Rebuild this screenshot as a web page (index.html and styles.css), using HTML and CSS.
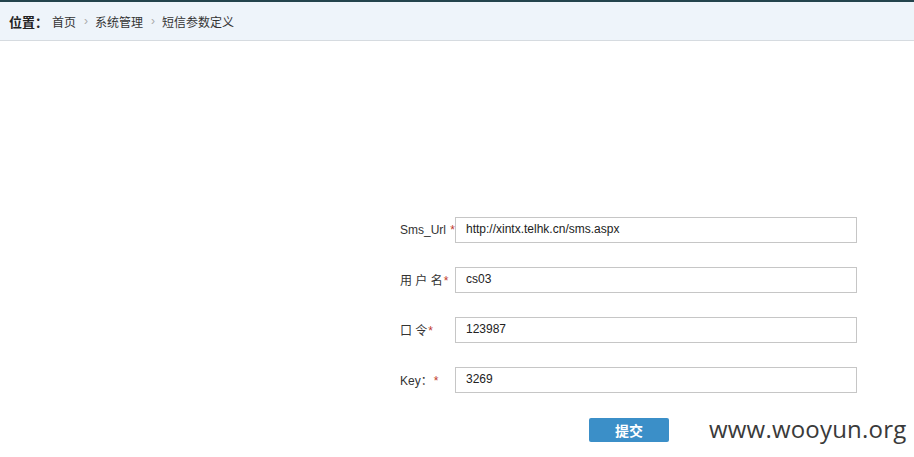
FILE: index.html
```html
<!DOCTYPE html>
<html>
<head>
<meta charset="utf-8">
<link rel="stylesheet" href="styles.css">
</head>
<body>
<div class="crumbs">
  <span class="loc">位置：</span>
  <span class="item">首页</span>
  <span class="sep">›</span>
  <span class="item">系统管理</span>
  <span class="sep">›</span>
  <span class="item">短信参数定义</span>
</div>
<div class="form">
  <div class="row"><label class="lbl">Sms_Url <i>*</i></label><input class="field" value="http://xintx.telhk.cn/sms.aspx"></div>
  <div class="row"><label class="lbl">用 户 名<i>*</i></label><input class="field" value="cs03"></div>
  <div class="row"><label class="lbl">口 令<i>*</i></label><input class="field" value="123987"></div>
  <div class="row"><label class="lbl">Key：<i>*</i></label><input class="field" value="3269"></div>
  <div class="actions"><button class="btn">提交</button></div>
</div>
<div class="mark">www.wooyun.org</div>
</body>
</html>
```
FILE: styles.css
```css
html, body { margin: 0; padding: 0; background: #fff; }
body {
  font-family: "Liberation Sans", Arial, "Noto Sans CJK SC", sans-serif;
  font-size: 12px;
  color: #333;
  width: 914px;
  height: 457px;
  overflow: hidden;
  position: relative;
}
.crumbs {
  height: 38px;
  border-top: 2px solid #23444c;
  border-bottom: 1px solid #d6dbe0;
  background: #eef4fa;
  display: flex;
  align-items: center;
  padding-left: 9px;
  font-size: 12px;
  color: #333;
}
.crumbs span { flex: none; }
.loc { font-weight: bold; font-size: 13px; color: #222; width: 43px; }
.sep { color: #aaa; width: 4px; margin: 0 7px 0 8px; font-size: 12px; }
.form {
  padding-left: 400px;
  padding-top: 176px;
  display: flex;
  flex-direction: column;
}
.row {
  display: flex;
  align-items: center;
  height: 25px;
  margin-bottom: 25px;
}
.lbl {
  width: 55px;
  color: #333;
  font-size: 12px;
  white-space: pre;
}
.lbl i { font-style: normal; color: #c0392b; margin-left: 1px; }
.field {
  box-sizing: border-box;
  width: 402px;
  height: 26px;
  border: 1px solid #c6c6c6;
  padding: 0 0 2px 10px;
  font-family: "Liberation Sans", Arial, sans-serif;
  font-size: 12px;
  color: #222;
  outline: none;
}
.actions { padding-left: 189px; margin-top: 1px; }
.btn {
  width: 80px;
  height: 24px;
  border: none;
  border-radius: 2px;
  background: #3b8fc8;
  color: #fff;
  font-family: "Noto Sans CJK SC", sans-serif;
  font-size: 14px;
  font-weight: bold;
  padding: 0;
}
.mark {
  position: absolute;
  left: 709px;
  top: 412px;
  font-family: "Open Sans", sans-serif;
  font-size: 24px;
  color: #3a3a3a;
  letter-spacing: 0.2px;
}
```
